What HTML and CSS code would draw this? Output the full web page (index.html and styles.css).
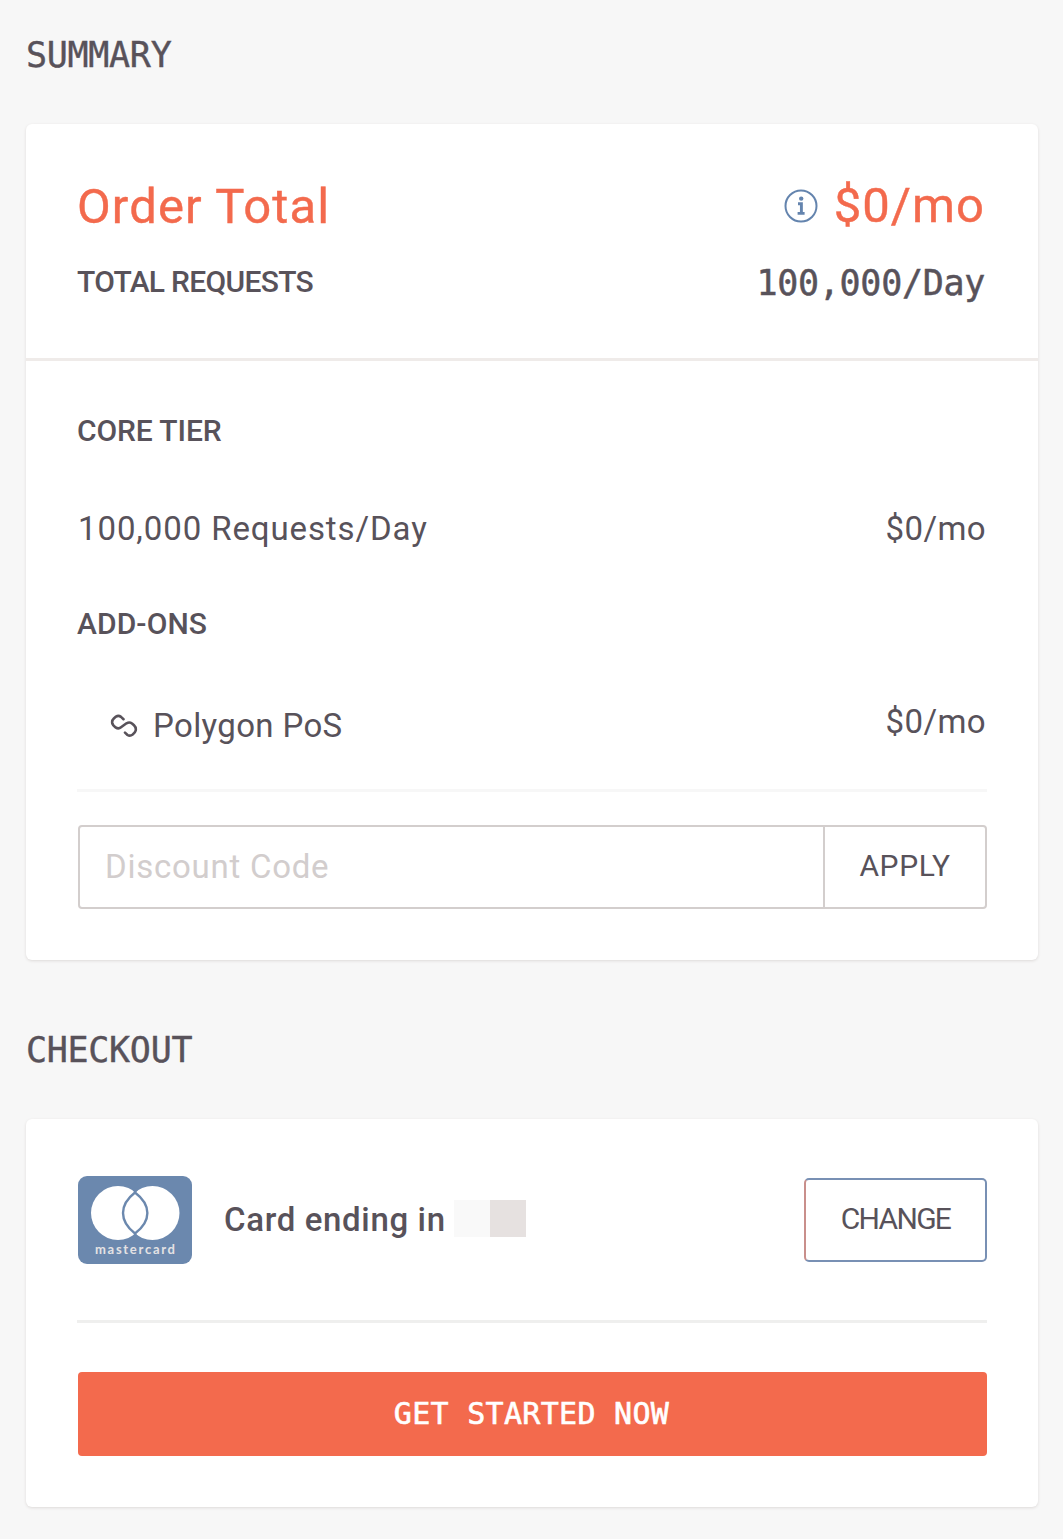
FILE: index.html
```
<!DOCTYPE html>
<html lang="en">
<head>
<meta charset="utf-8">
<title>Order summary</title>
<link rel="stylesheet" href="styles.css">
</head>
<body>
<main class="page">
  <h2 class="heading">SUMMARY</h2>
  <section class="card summary">
    <div class="totals">
      <div class="row total">
        <span class="total-label">Order Total</span>
        <span class="total-price">
          <svg class="info" viewBox="0 0 34 34" width="34" height="34" fill="none" stroke="currentColor">
            <circle cx="17" cy="17" r="15.500" stroke-width="2"/>
            <circle cx="17.200" cy="9.600" r="2.200" fill="currentColor" stroke="none"/>
            <path d="M14 14.800h3.400v9.300M13.600 24.400h7" stroke-width="2.900"/>
          </svg>
          <span class="total-amount">$0/mo</span>
        </span>
      </div>
      <div class="row requests">
        <span class="label requests-label">TOTAL REQUESTS</span>
        <span class="mono">100,000/Day</span>
      </div>
    </div>
    <div class="details">
      <h3 class="label core">CORE TIER</h3>
      <div class="row item tier">
        <span class="tier-name">100,000 Requests/Day</span>
        <span class="price">$0/mo</span>
      </div>
      <h3 class="label addons">ADD-ONS</h3>
      <div class="row item addon">
        <span class="addon-name">
          <svg class="polygon" viewBox="0 0 28 24" width="28" height="24" fill="none" stroke="currentColor" stroke-width="2.600" stroke-linecap="round" stroke-linejoin="round">
            <path d="M13.500 5.200L11 2.900Q8.500 1 6 2.600L3.800 4.500Q1.600 6.500 2.300 9.500Q3 11.600 5.500 13.300Q8.500 15.300 11 13.300L16.500 9.300Q19.500 7.700 22 9.500L24 11.300Q26.300 13.500 25.700 16.500Q25.300 18.300 22.700 20.500Q20 22.600 17.500 21L15 18.600"/>
          </svg>
          <span class="addon-text">Polygon PoS</span>
        </span>
        <span class="price">$0/mo</span>
      </div>
      <form class="discount">
        <input class="code" type="text" placeholder="Discount Code" aria-label="Discount Code">
        <button class="apply" type="button">APPLY</button>
      </form>
    </div>
  </section>
  <h2 class="heading second">CHECKOUT</h2>
  <section class="card checkout">
    <div class="payment">
      <svg class="brand" viewBox="0 0 114 88" width="114" height="88">
        <rect width="114" height="88" rx="9" fill="#6b88ae"/>
        <circle cx="40" cy="37" r="27" fill="#fff"/>
        <circle cx="74.500" cy="37" r="27" fill="#fff"/>
        <path d="M57 16.500C41 29 41 45 57 57.500C73.500 45 73.500 29 57 16.500Z" fill="#fff" stroke="#6b88ae" stroke-width="2.400"/>
        <path d="M54 12.500 57 17.500 61 12.500ZM54 61.500 57 56.500 61 61.500Z" fill="#6b88ae"/>
        <text class="brand-text" x="57" y="77.500" text-anchor="middle" textLength="80">mastercard</text>
      </svg>
      <span class="ending">Card ending in</span>
      <span class="mask"><i class="mask-light"></i><i class="mask-dark"></i></span>
      <button class="change" type="button">CHANGE</button>
    </div>
    <button class="start" type="button">GET STARTED NOW</button>
  </section>
</main>
</body>
</html>
```
FILE: styles.css
```
* { box-sizing: border-box; }
body {
  margin: 0;
  background: #f7f7f7;
  color: #58525a;
  font-family: Roboto, "Liberation Sans", sans-serif;
  font-size: 33px;
}
h2, h3 { margin: 0; font-weight: 400; }
button, input { font-family: inherit; color: inherit; margin: 0; }
svg { display: block; flex: none; }
.page { height: 1539px; padding: 34px 24px 0 26px; overflow: hidden; }
.heading {
  height: 42px;
  font: 400 35px/42px "DejaVu Sans Mono", monospace;
  letter-spacing: -0.3px;
  -webkit-text-stroke: .4px currentColor;
}
.card {
  background: #fff;
  border-radius: 6px;
  box-shadow: 0 1px 3px rgba(70, 50, 40, .14);
  width: 1012px;
}
.summary { margin-top: 48px; height: 836px; }
.row { display: flex; justify-content: space-between; align-items: center; white-space: nowrap; }
.totals { height: 237px; padding: 52px 53px 0 51px; border-bottom: 3px solid #efebe9; }
.total { height: 60px; color: #f36a4d; font-size: 49px; line-height: 60px; -webkit-text-stroke: .4px currentColor; }
.total-label { letter-spacing: 1.15px; padding-top: 1px; }
.total-price { display: flex; align-items: center; gap: 16px; }
.total-amount { letter-spacing: 1px; }
.info { color: #6484ae; }
.requests { height: 48px; margin-top: 22px; }
.label { font-size: 30px; font-weight: 500; line-height: 40px; }
.requests-label { letter-spacing: -.7px; }
.mono {
  font: 400 35px/48px "DejaVu Sans Mono", monospace;
  letter-spacing: -.3px;
  padding-top: 1px;
  -webkit-text-stroke: .5px currentColor;
}
.details { padding: 50px 51px 0 51px; }
.core { letter-spacing: -.1px; }
.item { height: 44px; line-height: 44px; padding-right: 1px; }
.tier { margin-top: 56px; }
.tier-name { letter-spacing: .9px; padding-left: 1px; }
.price { letter-spacing: .4px; }
.addons { margin-top: 53px; letter-spacing: .1px; }
.addon { height: 148px; padding: 57px 1px 46px 33px; border-bottom: 3px solid #f7f7f7; }
.addon-name { display: flex; align-items: center; gap: 15px; padding-top: 8px; }
.addon-text { letter-spacing: .35px; }
.discount { display: flex; margin: 33px 0 0 1px; height: 84px; border: 2px solid #d3cecd; border-radius: 4px; }
.code {
  flex: 1; min-width: 0; padding: 0 25px 2px; border: 0; background: none;
  font-size: 33px; letter-spacing: .75px;
}
.code::placeholder { color: #d2cdcd; opacity: 1; }
.apply {
  width: 162px; padding: 0 0 4px; border: 0; border-left: 2px solid #d3cecd;
  background: none; font-size: 30px; letter-spacing: .6px;
}
.second { margin-top: 69px; }
.checkout { margin-top: 48px; height: 388px; padding: 56px 51px 0; }
.payment { display: flex; align-items: center; height: 148px; padding-bottom: 55px; border-bottom: 3px solid #efefee; }
.brand { margin-left: 1px; }
.ending { margin-left: 32px; font-weight: 500; letter-spacing: .65px; white-space: nowrap; padding-bottom: 2px; }
.brand-text { fill: #e4e2e4; font: 700 13px Lato, sans-serif; }
.mask { display: flex; margin-left: 8px; padding-bottom: 4px; }
.mask-light, .mask-dark { width: 36px; height: 37px; background: #f9f9f9; }
.mask-dark { background: #e6e1e0; }
.change {
  margin-left: auto; width: 183px; height: 84px; padding: 0 0 4px;
  background: #fff; border: 2px solid #7890b4; border-left-color: #c98f8b; border-radius: 5px;
  font-size: 30px; letter-spacing: -1.7px;
}
.start {
  display: block; width: 909px; height: 84px; margin: 49px 0 0 1px; padding: 0 2px 2px 0;
  background: #f36a4d; color: #fff; border: 0; border-radius: 4px;
  font: 400 30px "DejaVu Sans Mono", monospace; letter-spacing: .3px;
  -webkit-text-stroke: .6px currentColor;
}
```
